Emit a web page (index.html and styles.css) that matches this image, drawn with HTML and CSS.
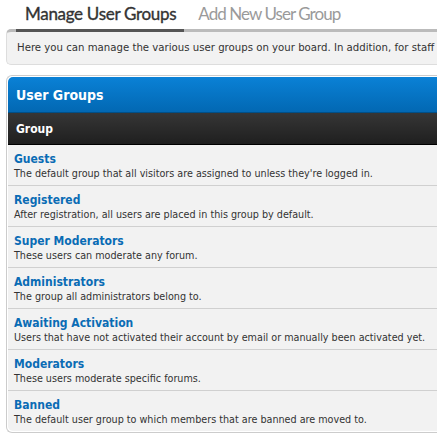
FILE: index.html
```html
<!DOCTYPE html>
<html>
<head>
<meta charset="utf-8">
<link rel="stylesheet" href="styles.css">
</head>
<body>
<div class="page">
  <div class="tabs">
    <span class="tab active">Manage User Groups</span>
    <span class="tab">Add New User Group</span>
  </div>
  <div class="desc">Here you can manage the various user groups on your board. In addition, for staff</div>
  <div class="box">
    <div class="box-title">User Groups</div>
    <div class="box-head">Group</div>
    <div class="row"><div class="name">Guests</div><div class="note">The default group that all visitors are assigned to unless they're logged in.</div></div>
    <div class="row"><div class="name">Registered</div><div class="note">After registration, all users are placed in this group by default.</div></div>
    <div class="row"><div class="name">Super Moderators</div><div class="note">These users can moderate any forum.</div></div>
    <div class="row"><div class="name">Administrators</div><div class="note">The group all administrators belong to.</div></div>
    <div class="row"><div class="name">Awaiting Activation</div><div class="note">Users that have not activated their account by email or manually been activated yet.</div></div>
    <div class="row"><div class="name">Moderators</div><div class="note">These users moderate specific forums.</div></div>
    <div class="row last"><div class="name">Banned</div><div class="note">The default user group to which members that are banned are moved to.</div></div>
  </div>
</div>
</body>
</html>
```
FILE: styles.css
```css
html, body {
  margin: 0;
  padding: 0;
  background: #fff;
  overflow: hidden;
}
.page {
  width: 760px;
  padding: 0 0 0 6px;
  font-family: "DejaVu Sans Condensed", "DejaVu Sans", sans-serif;
  color: #333;
}
.tabs {
  display: flex;
  align-items: flex-end;
  height: 32px;
  margin-bottom: -3px;
  padding-left: 10px;
  position: relative;
  z-index: 1;
}
.tab {
  font-family: Lato, "Open Sans", sans-serif;
  font-size: 17px;
  color: #9a9a9a;
  padding: 0 8px 4px 9px;
  border-bottom: 3px solid transparent;
  line-height: 22px;
  letter-spacing: -0.95px;
}
.tab.active {
  color: #333;
  border-bottom-color: #555;
  margin-right: 5px;
  letter-spacing: -0.3px;
  -webkit-text-stroke: 0.35px #333;
}
.desc {
  background: #f2f2f2;
  border: 1px solid #ddd;
  border-top: 3px solid #bbb;
  border-radius: 5px 0 0 5px;
  border-right: none;
  padding: 9px 10px 9px 10px;
  font-size: 11.3px;
  line-height: 14px;
  white-space: nowrap;
  overflow: hidden;
}
.box {
  margin-top: 10px;
  border: 1px solid #ccc;
  border-right: none;
  border-radius: 6px 0 0 6px;
  padding: 1px 0 1px 1px;
  background: #fff;
}
.box-title {
  background: linear-gradient(#0a81d6, #0268b3);
  color: #fff;
  font-weight: bold;
  font-size: 14px;
  line-height: 18px;
  padding: 9px 8px 8px 8px;
  border-radius: 5px 0 0 0;
  border-bottom: 1px solid #014f87;
}
.box-head {
  background: linear-gradient(#363636, #1f1f1f);
  color: #fff;
  font-weight: bold;
  font-size: 12px;
  line-height: 15px;
  padding: 9px 8px 7px 8px;
  border-bottom: 1px solid #000;
}
.row {
  background: #f2f2f2;
  padding: 7px 6px 5px 6px;
  height: 28px;
  border-bottom: 1px solid #d0d0d0;
}
.row.last {
  border-bottom: none;
  border-radius: 0 0 0 5px;
}
.name {
  color: #0a6cb5;
  font-weight: bold;
  font-size: 12px;
  line-height: 15px;
}
.note {
  font-size: 10.7px;
  line-height: 13px;
  color: #333;
  white-space: nowrap;
}
```
